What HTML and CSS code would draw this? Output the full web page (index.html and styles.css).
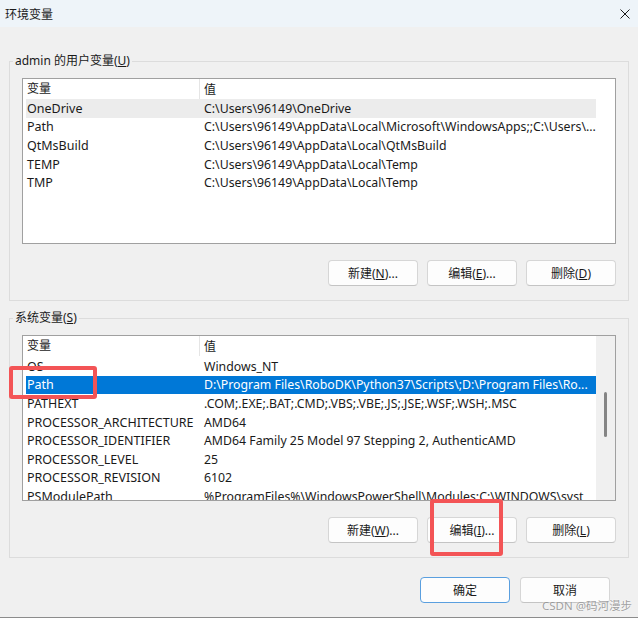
FILE: index.html
```html
<!DOCTYPE html>
<html lang="zh-CN">
<head>
  <meta charset="UTF-8" />
  <title>环境变量</title>
  <link rel="stylesheet" href="styles.css">
</head>
<body>
  <div class="window">
    <div class="titlebar">
      <span class="title">环境变量</span>
      <svg class="close" width="10" height="10" viewBox="0 0 10 10">
        <path d="M0.5 0.5 L9.5 9.5 M9.5 0.5 L0.5 9.5" stroke="#1a1a1a" stroke-width="1" fill="none" />
      </svg>
    </div>

    <div class="content">
      <div class="group">
        <span class="group-title">admin 的用户变量(<u>U</u>)</span>
        <div class="list">
          <div class="list-main">
            <div class="list-head">
              <span class="c1">变量</span>
              <span class="c2">值</span>
            </div>
            <div class="list-body">
              <div class="row hover"><span class="c1">OneDrive</span><span class="c2">C:\Users\96149\OneDrive</span></div>
              <div class="row"><span class="c1">Path</span><span class="c2">C:\Users\96149\AppData\Local\Microsoft\WindowsApps;;C:\Users\...</span></div>
              <div class="row"><span class="c1">QtMsBuild</span><span class="c2">C:\Users\96149\AppData\Local\QtMsBuild</span></div>
              <div class="row"><span class="c1">TEMP</span><span class="c2">C:\Users\96149\AppData\Local\Temp</span></div>
              <div class="row"><span class="c1">TMP</span><span class="c2">C:\Users\96149\AppData\Local\Temp</span></div>
            </div>
          </div>
        </div>
        <div class="actions">
          <button class="btn">新建(<u>N</u>)...</button>
          <button class="btn">编辑(<u>E</u>)...</button>
          <button class="btn">删除(<u>D</u>)</button>
        </div>
      </div>

      <div class="group">
        <span class="group-title">系统变量(<u>S</u>)</span>
        <div class="list sys">
          <div class="list-main">
            <div class="list-head">
              <span class="c1">变量</span>
              <span class="c2">值</span>
            </div>
            <div class="list-body">
              <div class="row"><span class="c1">OS</span><span class="c2">Windows_NT</span></div>
              <div class="row active"><span class="c1">Path</span><span class="c2">D:\Program Files\RoboDK\Python37\Scripts\;D:\Program Files\Ro...</span></div>
              <div class="row"><span class="c1">PATHEXT</span><span class="c2">.COM;.EXE;.BAT;.CMD;.VBS;.VBE;.JS;.JSE;.WSF;.WSH;.MSC</span></div>
              <div class="row"><span class="c1">PROCESSOR_ARCHITECTURE</span><span class="c2">AMD64</span></div>
              <div class="row"><span class="c1">PROCESSOR_IDENTIFIER</span><span class="c2">AMD64 Family 25 Model 97 Stepping 2, AuthenticAMD</span></div>
              <div class="row"><span class="c1">PROCESSOR_LEVEL</span><span class="c2">25</span></div>
              <div class="row"><span class="c1">PROCESSOR_REVISION</span><span class="c2">6102</span></div>
              <div class="row"><span class="c1">PSModulePath</span><span class="c2">%ProgramFiles%\WindowsPowerShell\Modules;C:\WINDOWS\syst</span></div>
            </div>
          </div>
          <div class="scrollbar"><div class="thumb"></div></div>
        </div>
        <div class="actions">
          <button class="btn">新建(<u>W</u>)...</button>
          <button class="btn">编辑(<u>I</u>)...</button>
          <button class="btn">删除(<u>L</u>)</button>
        </div>
      </div>

      <div class="footer">
        <button class="btn primary">确定</button>
        <button class="btn">取消</button>
      </div>
    </div>

    <div class="mark mark-path"></div>
    <div class="mark mark-edit"></div>
    <div class="watermark">CSDN @码河漫步</div>
  </div>
</body>
</html>
```

FILE: styles.css
```css
* {
  box-sizing: border-box;
}
body {
  margin: 0;
  background: #f0f0f0;
  font-family: "Noto Sans", "Noto Sans CJK SC", sans-serif;
  font-size: 12px;
  color: #1a1a1a;
}
.window {
  position: relative;
  width: 638px;
  height: 618px;
  overflow: hidden;
  border-bottom: 1px solid #8c8c8c;
}
.titlebar {
  height: 27px;
  background: #eef4f9;
  display: flex;
  align-items: center;
  justify-content: space-between;
  padding: 0 8px 0 5px;
}
.title {
  font-size: 12px;
}
.content {
  padding: 0 9px;
}
.group {
  position: relative;
  margin-top: 34px;
  border: 1px solid #dcdcdc;
  padding: 16px 12px 14px;
}
.group + .group {
  margin-top: 17px;
}
.group-title {
  position: absolute;
  top: -9px;
  left: 3px;
  padding: 0 2px;
  line-height: 16px;
  background: #f0f0f0;
}
.list {
  height: 166px;
  border: 1px solid #a0a0a0;
  background: #fff;
  display: flex;
  font-size: 12.5px;
}
.list-main {
  width: 573px;
  overflow: hidden;
}
.list-head {
  height: 20px;
  display: flex;
  align-items: center;
  margin-left: 3px;
  font-size: 12px;
}
.list-head .c1 {
  border-right: 1px solid #e5e5e5;
  height: 20px;
  line-height: 20px;
}
.sys .list-head {
  height: 25px;
  padding-bottom: 5px;
}
.list-body {
  overflow: hidden;
}
.sys .list-body {
  height: 139px;
}
.sys .list-body .row:first-child {
  margin-top: -4px;
}
.row {
  height: 18.6px;
  margin-left: 3px;
  display: flex;
  align-items: center;
  white-space: nowrap;
}
.c1 {
  width: 174px;
  flex: none;
  padding-left: 1px;
}
.c2 {
  flex: 1;
  padding-left: 4px;
  overflow: hidden;
  text-overflow: ellipsis;
  white-space: nowrap;
}
.row .c2 {
  font-size: 12.3px;
}
.row.hover {
  background: #ececec;
}
.row.active {
  background: #0078d7;
  color: #fff;
}
.scrollbar {
  width: 19px;
  background: #f0f0f0;
  padding-top: 56px;
}
.thumb {
  width: 3px;
  height: 45px;
  margin-left: 8px;
  border-radius: 2px;
  background: #858585;
}
.actions {
  display: flex;
  justify-content: flex-end;
  gap: 9px;
  margin-top: 16px;
}
.btn {
  width: 90px;
  height: 26px;
  padding: 0;
  border: 1px solid #d6d6d6;
  border-bottom-color: #c4c4c4;
  border-radius: 4px;
  background: #fdfdfd;
  font-family: inherit;
  font-size: 12px;
  color: #1a1a1a;
}
.btn.primary {
  border-color: #5a9fdf;
}
.footer {
  display: flex;
  justify-content: flex-end;
  gap: 10px;
  margin-top: 19px;
  padding-right: 19px;
}
.mark {
  position: absolute;
  border: 4px solid #f35456;
  border-radius: 3px;
}
.mark-path {
  left: 9px;
  top: 366px;
  width: 88px;
  height: 33px;
}
.mark-edit {
  left: 430px;
  top: 499px;
  width: 73px;
  height: 57px;
}
.watermark {
  position: absolute;
  right: 6px;
  bottom: 4px;
  font-size: 11.5px;
  color: rgba(130, 130, 130, 0.75);
  text-shadow: 0 0 2px #fff;
}
```
